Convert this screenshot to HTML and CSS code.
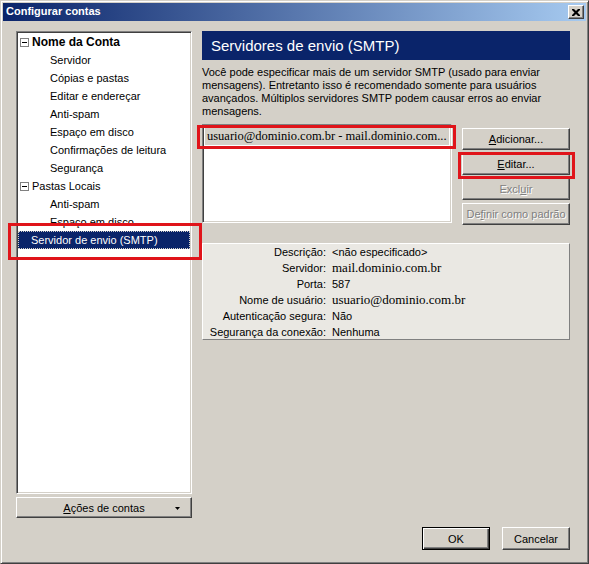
FILE: index.html
```html
<!DOCTYPE html>
<html lang="pt">
<head>
<meta charset="utf-8">
<title>Configurar contas</title>
<link rel="stylesheet" href="styles.css">
</head>
<body>
<div class="window">
  <div class="titlebar">
    <span class="title">Configurar contas</span>
    <span class="close"><svg width="8" height="7" viewBox="0 0 8 7"><path d="M0 0h2l2 2 2-2h2v1l-2.5 2.5 2.5 2.5v1h-2l-2-2-2 2h-2v-1l2.5-2.5-2.5-2.5z" fill="#000"/></svg></span>
  </div>
  <div class="content">
    <div class="main">
      <div class="leftcol">
        <div class="tree sunken">
          <div class="row lvl0"><span class="box"><svg width="9" height="9" viewBox="0 0 9 9"><rect x="0.5" y="0.5" width="8" height="8" fill="#fff" stroke="#808080"/><path d="M2 4.5h5" stroke="#000"/></svg></span><b>Nome da Conta</b></div>
          <div class="row lvl1">Servidor</div>
          <div class="row lvl1">Cópias e pastas</div>
          <div class="row lvl1">Editar e endereçar</div>
          <div class="row lvl1">Anti-spam</div>
          <div class="row lvl1">Espaço em disco</div>
          <div class="row lvl1">Confirmações de leitura</div>
          <div class="row lvl1">Segurança</div>
          <div class="row lvl0"><span class="box"><svg width="9" height="9" viewBox="0 0 9 9"><rect x="0.5" y="0.5" width="8" height="8" fill="#fff" stroke="#808080"/><path d="M2 4.5h5" stroke="#000"/></svg></span>Pastas Locais</div>
          <div class="row lvl1">Anti-spam</div>
          <div class="row lvl1">Espaço em disco</div>
          <div class="row lvl0 nobox selected"><span class="seltext">Servidor de envio (SMTP)</span></div>
        </div>
        <div class="btn actions"><span class="actlabel"><u>A</u>ções de contas</span><svg class="arrow" width="5" height="3" viewBox="0 0 5 3"><path d="M0 0h5l-2.5 3z" fill="#000"/></svg></div>
      </div>
      <div class="rightcol">
        <div class="header">Servidores de envio (SMTP)</div>
        <p class="desc">Você pode especificar mais de um servidor SMTP (usado para enviar<br>mensagens). Entretanto isso é recomendado somente para usuários<br>avançados. Múltiplos servidores SMTP podem causar erros ao enviar<br>mensagens.</p>
        <div class="listarea">
          <div class="list sunken">
            <div class="listrow">usuario@dominio.com.br - mail.dominio.com...</div>
          </div>
          <div class="btncol">
            <div class="btn"><u>A</u>dicionar...</div>
            <div class="btn"><u>E</u>ditar...</div>
            <div class="btn disabled">Excl<u>u</u>ir</div>
            <div class="btn disabled">De<u>f</u>inir como padrão</div>
          </div>
        </div>
        <div class="details">
          <div class="dl">Descrição:</div><div class="dv">&lt;não especificado&gt;</div>
          <div class="dl">Servidor:</div><div class="dv serif">mail.dominio.com.br</div>
          <div class="dl">Porta:</div><div class="dv">587</div>
          <div class="dl">Nome de usuário:</div><div class="dv serif">usuario@dominio.com.br</div>
          <div class="dl">Autenticação segura:</div><div class="dv">Não</div>
          <div class="dl">Segurança da conexão:</div><div class="dv">Nenhuma</div>
        </div>
      </div>
    </div>
    <div class="footer">
      <div class="btn default">OK</div>
      <div class="btn">Cancelar</div>
    </div>
  </div>
  <div class="mark mark-tree"></div>
  <div class="mark mark-list"></div>
  <div class="mark mark-edit"></div>
</div>
</body>
</html>
```
FILE: styles.css
```css
html, body {
  margin: 0;
  padding: 0;
  background: #d4d0c8;
}
body {
  font-family: "Liberation Sans", Arial, sans-serif;
  font-size: 11px;
  color: #000;
}
.window {
  position: relative;
  width: 589px;
  height: 564px;
  box-sizing: border-box;
  background: #d4d0c8;
  border: 1px solid;
  border-color: #d4d0c8 #404040 #404040 #d4d0c8;
  box-shadow: inset 1px 1px 0 #fff, inset -1px -1px 0 #808080;
  padding: 2px;
  display: flex;
  flex-direction: column;
}
.titlebar {
  height: 18px;
  background: linear-gradient(to right, #0a246a, #a6caf0);
  display: flex;
  align-items: center;
  justify-content: space-between;
  padding: 0 2px 0 3px;
}
.title {
  color: #fff;
  font-weight: bold;
  font-size: 11px;
  position: relative;
  top: -1px;
}
.close {
  width: 16px;
  height: 14px;
  box-sizing: border-box;
  background: #d4d0c8;
  border: 1px solid;
  border-color: #fff #404040 #404040 #fff;
  box-shadow: inset -1px -1px 0 #808080;
  display: flex;
  align-items: center;
  justify-content: center;
}
.content {
  flex: 1;
  padding: 10px 16px 0 13px;
  display: flex;
  flex-direction: column;
}
.main {
  display: flex;
  gap: 10px;
  height: 487px;
}
.leftcol {
  width: 176px;
  display: flex;
  flex-direction: column;
  gap: 3px;
}
.sunken {
  box-sizing: border-box;
  background: #fff;
  border: 1px solid;
  border-color: #808080 #fff #fff #808080;
  box-shadow: inset 1px 1px 0 #404040, inset -1px -1px 0 #d4d0c8;
}
.tree {
  height: 463px;
  padding: 1px;
}
.row {
  height: 18px;
  line-height: 18px;
  white-space: nowrap;
  display: flex;
  align-items: center;
  color: #000;
}
.row.lvl0 { padding-left: 2px; }
.row.lvl0 .box { width: 9px; height: 9px; margin-right: 3px; display: flex; }
.row.lvl0 b { font-weight: bold; font-size: 12px; }
.row.lvl1 { padding-left: 32px; }
.row.nobox { padding-left: 0; }
.row.selected {
  background: #0a246a;
  color: #fff;
  outline: 1px dotted #d4d0c8;
  outline-offset: -1px;
}
.seltext { padding-left: 13px; }
.btn {
  box-sizing: border-box;
  height: 22px;
  background: #d4d0c8;
  border: 1px solid;
  border-color: #fff #404040 #404040 #fff;
  box-shadow: inset -1px -1px 0 #808080;
  display: flex;
  align-items: center;
  justify-content: center;
  white-space: nowrap;
}
.btn.disabled {
  color: #808080;
  text-shadow: 1px 1px 0 #fff;
}
.actions {
  height: 21px;
  position: relative;
}
.actions .arrow {
  position: absolute;
  right: 11px;
  top: 9px;
}
.rightcol {
  width: 368px;
  display: flex;
  flex-direction: column;
}
.header {
  height: 29px;
  background: #0a246a;
  color: #fff;
  font-size: 15px;
  line-height: 29px;
  padding-left: 9px;
  box-sizing: border-box;
}
.desc {
  margin: 6px 0 0 0;
  line-height: 13px;
  height: 52px;
  white-space: nowrap;
}
.listarea {
  margin-top: 6px;
  display: flex;
  gap: 10px;
}
.list {
  width: 250px;
  height: 99px;
  padding: 2px 2px;
}
.listrow {
  height: 18px;
  line-height: 18px;
  background: #d4d0c8;
  font-family: "Liberation Serif", "Times New Roman", serif;
  font-size: 12.5px;
  padding-left: 2px;
  white-space: nowrap;
}
.btncol {
  width: 108px;
  padding-top: 4px;
  display: flex;
  flex-direction: column;
  gap: 3px;
}
.details {
  margin-top: 18px;
  height: 97px;
  box-sizing: border-box;
  background: #eae8e3;
  border: 1px solid;
  border-color: #fff #808080 #808080 #fff;
  display: grid;
  grid-template-columns: 123px 1fr;
  grid-auto-rows: 16px;
  column-gap: 6px;
}
.dl {
  text-align: right;
  line-height: 16px;
  white-space: nowrap;
}
.dv {
  line-height: 16px;
  white-space: nowrap;
}
.dv.serif {
  font-family: "Liberation Serif", "Times New Roman", serif;
  font-size: 13px;
}
.footer {
  margin-top: 9px;
  display: flex;
  justify-content: flex-end;
  gap: 12px;
}
.footer .btn {
  width: 68px;
  height: 23px;
}
.footer .btn.default {
  border-color: #000;
  box-shadow: inset 1px 1px 0 #fff, inset -1px -1px 0 #404040, inset -2px -2px 0 #808080;
}
.mark {
  position: absolute;
  border: 3px solid #e0141a;
  box-sizing: border-box;
  pointer-events: none;
}
.mark-tree { left: 7px; top: 222px; width: 194px; height: 37px; }
.mark-list { left: 196px; top: 124px; width: 259px; height: 24px; }
.mark-edit { left: 457px; top: 151px; width: 117px; height: 27px; }
```
